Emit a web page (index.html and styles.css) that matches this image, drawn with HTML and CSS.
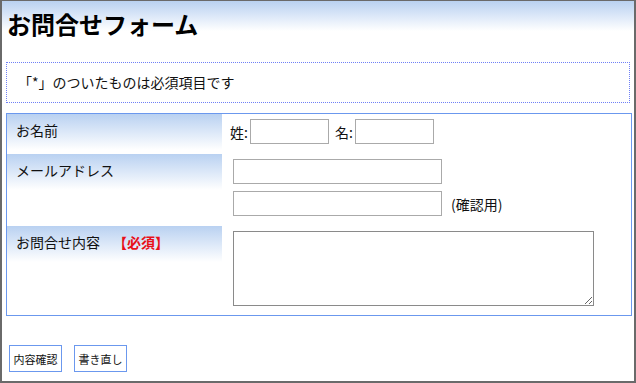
FILE: index.html
```html
<!DOCTYPE html>
<html lang="ja">
<head>
<meta charset="utf-8">
<title>お問合せフォーム</title>
<link rel="stylesheet" href="styles.css">
</head>
<body>
<div class="frame">
  <div class="header">
    <h1 class="title">お問合せフォーム</h1>
  </div>
  <div class="notice">「*」のついたものは必須項目です</div>
  <table class="form-table">
    <tr class="row-name">
      <th class="label">お名前</th>
      <td class="field">
        <span class="prefix">姓:</span><input class="name-input" type="text"><span class="prefix prefix-second">名:</span><input class="name-input" type="text">
      </td>
    </tr>
    <tr class="row-mail">
      <th class="label">メールアドレス</th>
      <td class="field">
        <input class="mail-input mail-first" type="text">
        <div class="mail-confirm"><input class="mail-input" type="text"><span class="confirm-note">(確認用)</span></div>
      </td>
    </tr>
    <tr class="row-body">
      <th class="label">お問合せ内容<span class="required">【必須】</span></th>
      <td class="field">
        <textarea class="body-input"></textarea>
      </td>
    </tr>
  </table>
  <div class="actions">
    <button class="btn" type="button">内容確認</button>
    <button class="btn" type="button">書き直し</button>
  </div>
</div>
</body>
</html>
```

FILE: styles.css
```css
html, body {
  margin: 0;
  padding: 0;
  background: #fff;
}
body {
  font-family: "Noto Sans CJK JP", "Noto Sans", sans-serif;
  font-size: 14px;
  color: #111;
}
.frame {
  box-sizing: border-box;
  width: 636px;
  height: 383px;
  border-top: 1px solid #6a6a6a;
  border-left: 2px solid #6a6a6a;
  border-right: 2px solid #6a6a6a;
  border-bottom: 2px solid #6a6a6a;
  overflow: hidden;
}
.header {
  height: 48px;
  background: linear-gradient(#b9d1f1, #ffffff) no-repeat top left / 100% 30px;
}
.title {
  margin: 0;
  padding: 7px 0 0 5px;
  font-size: 24px;
  line-height: 32px;
  font-weight: bold;
  color: #000;
}
.notice {
  box-sizing: border-box;
  margin: 13px 0 0 4px;
  width: 624px;
  height: 41px;
  border: 1px dotted #6f80f6;
  padding: 0 0 0 11px;
  line-height: 38px;
}
.form-table {
  margin: 10px 0 0 4px;
  width: 626px;
  border: 1px solid #6b98ee;
  border-collapse: separate;
  border-spacing: 0;
}
.label {
  width: 206px;
  text-align: left;
  vertical-align: top;
  font-weight: normal;
  padding: 6px 0 0 9px;
  line-height: 20px;
  background: linear-gradient(#b9d1f1, #ffffff) no-repeat top left / 100% 36px;
}
.field {
  vertical-align: top;
  padding: 5px 0 0 8px;
}
.row-name { height: 40px; }
.row-mail { height: 72px; }
.row-body { height: 89px; }
.prefix {
  vertical-align: middle;
}
.prefix-second {
  margin-left: 6px;
}
input, textarea {
  box-sizing: border-box;
  margin: 0;
  padding: 0;
  font: inherit;
  background: #fff;
}
.name-input {
  width: 79px;
  height: 25px;
  border: 1px solid #aaaaaa;
  vertical-align: middle;
  margin-left: 2px;
}
.mail-input {
  width: 209px;
  height: 25px;
  border: 1px solid #aaaaaa;
  margin-left: 3px;
  vertical-align: middle;
}
.mail-first {
  display: block;
}
.mail-confirm {
  margin-top: 7px;
  display: flex;
  align-items: center;
}
.confirm-note {
  margin-left: 9px;
}
.body-input {
  display: block;
  width: 361px;
  height: 75px;
  margin-left: 3px;
  border: 1px solid #8a8a8a;
}
.required {
  color: #e8101a;
  font-weight: bold;
  margin-left: 13px;
}
.actions {
  display: flex;
  gap: 12px;
  margin: 29px 0 0 7px;
}
.btn {
  box-sizing: border-box;
  width: 53px;
  height: 27px;
  padding: 0;
  border: 1px solid #6b98ee;
  background: #fff;
  font-family: "Noto Sans CJK JP", sans-serif;
  font-size: 11px;
  color: #111;
}
```
